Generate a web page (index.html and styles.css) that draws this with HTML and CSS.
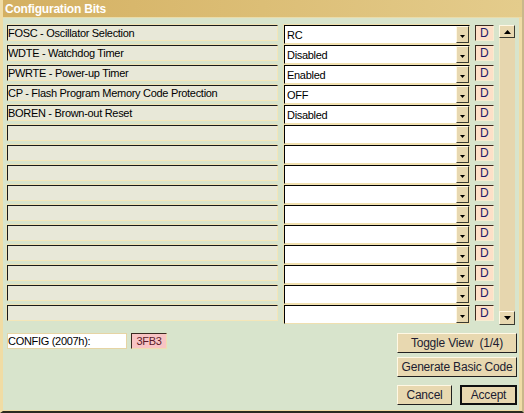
FILE: index.html
```html
<!DOCTYPE html>
<html>
<head>
<meta charset="utf-8">
<link rel="stylesheet" href="styles.css">
</head>
<body>
<div class="win">
  <div class="title">Configuration Bits</div>
  <div class="main">
    <div class="rows">
      <div class="row"><div class="lbl">FOSC - Oscillator Selection</div><div class="sel"><span class="val">RC</span><span class="dd"><svg width="5" height="3" viewBox="0 0 5 3"><path d="M0 0H5L2.5 3Z" fill="#000"/></svg></span></div><div class="d">D</div></div>
      <div class="row"><div class="lbl">WDTE - Watchdog Timer</div><div class="sel"><span class="val">Disabled</span><span class="dd"><svg width="5" height="3" viewBox="0 0 5 3"><path d="M0 0H5L2.5 3Z" fill="#000"/></svg></span></div><div class="d">D</div></div>
      <div class="row"><div class="lbl">PWRTE - Power-up Timer</div><div class="sel"><span class="val">Enabled</span><span class="dd"><svg width="5" height="3" viewBox="0 0 5 3"><path d="M0 0H5L2.5 3Z" fill="#000"/></svg></span></div><div class="d">D</div></div>
      <div class="row"><div class="lbl">CP - Flash Program Memory Code Protection</div><div class="sel"><span class="val">OFF</span><span class="dd"><svg width="5" height="3" viewBox="0 0 5 3"><path d="M0 0H5L2.5 3Z" fill="#000"/></svg></span></div><div class="d">D</div></div>
      <div class="row"><div class="lbl">BOREN - Brown-out Reset</div><div class="sel"><span class="val">Disabled</span><span class="dd"><svg width="5" height="3" viewBox="0 0 5 3"><path d="M0 0H5L2.5 3Z" fill="#000"/></svg></span></div><div class="d">D</div></div>
      <div class="row"><div class="lbl"></div><div class="sel"><span class="val"></span><span class="dd"><svg width="5" height="3" viewBox="0 0 5 3"><path d="M0 0H5L2.5 3Z" fill="#000"/></svg></span></div><div class="d">D</div></div>
      <div class="row"><div class="lbl"></div><div class="sel"><span class="val"></span><span class="dd"><svg width="5" height="3" viewBox="0 0 5 3"><path d="M0 0H5L2.5 3Z" fill="#000"/></svg></span></div><div class="d">D</div></div>
      <div class="row"><div class="lbl"></div><div class="sel"><span class="val"></span><span class="dd"><svg width="5" height="3" viewBox="0 0 5 3"><path d="M0 0H5L2.5 3Z" fill="#000"/></svg></span></div><div class="d">D</div></div>
      <div class="row"><div class="lbl"></div><div class="sel"><span class="val"></span><span class="dd"><svg width="5" height="3" viewBox="0 0 5 3"><path d="M0 0H5L2.5 3Z" fill="#000"/></svg></span></div><div class="d">D</div></div>
      <div class="row"><div class="lbl"></div><div class="sel"><span class="val"></span><span class="dd"><svg width="5" height="3" viewBox="0 0 5 3"><path d="M0 0H5L2.5 3Z" fill="#000"/></svg></span></div><div class="d">D</div></div>
      <div class="row"><div class="lbl"></div><div class="sel"><span class="val"></span><span class="dd"><svg width="5" height="3" viewBox="0 0 5 3"><path d="M0 0H5L2.5 3Z" fill="#000"/></svg></span></div><div class="d">D</div></div>
      <div class="row"><div class="lbl"></div><div class="sel"><span class="val"></span><span class="dd"><svg width="5" height="3" viewBox="0 0 5 3"><path d="M0 0H5L2.5 3Z" fill="#000"/></svg></span></div><div class="d">D</div></div>
      <div class="row"><div class="lbl"></div><div class="sel"><span class="val"></span><span class="dd"><svg width="5" height="3" viewBox="0 0 5 3"><path d="M0 0H5L2.5 3Z" fill="#000"/></svg></span></div><div class="d">D</div></div>
      <div class="row"><div class="lbl"></div><div class="sel"><span class="val"></span><span class="dd"><svg width="5" height="3" viewBox="0 0 5 3"><path d="M0 0H5L2.5 3Z" fill="#000"/></svg></span></div><div class="d">D</div></div>
      <div class="row"><div class="lbl"></div><div class="sel"><span class="val"></span><span class="dd"><svg width="5" height="3" viewBox="0 0 5 3"><path d="M0 0H5L2.5 3Z" fill="#000"/></svg></span></div><div class="d">D</div></div>
    </div>
    <div class="sb">
      <div class="sbbtn"><svg width="7" height="4" viewBox="0 0 7 4"><path d="M0 4H7L3.5 0Z" fill="#000"/></svg></div>
      <div class="track"></div>
      <div class="sbbtn down"><svg width="7" height="4" viewBox="0 0 7 4"><path d="M0 0H7L3.5 4Z" fill="#000"/></svg></div>
    </div>
  </div>
  <div class="bottom">
    <div class="cfg">
      <div class="cfgname">CONFIG (2007h):</div>
      <div class="cfgval">3FB3</div>
    </div>
    <div class="btns">
      <div class="btn">Toggle View&nbsp; (1/4)</div>
      <div class="btn">Generate Basic Code</div>
      <div class="pair">
        <div class="btn">Cancel</div>
        <div class="btn def">Accept</div>
      </div>
    </div>
  </div>
</div>
</body>
</html>
```
FILE: styles.css
```css
html, body {
  margin: 0;
  padding: 0;
  background: #d8e4cc;
}
.win {
  width: 524px;
  height: 413px;
  box-sizing: border-box;
  background: #d8e4cc;
  border-left: 3px solid #f0dca4;
  border-right: 2px solid #c9b88a;
  border-bottom: 2px solid #2b2a20;
  box-shadow: inset -3px -1px 0 #efdca6;
  font-family: "Liberation Sans", Arial, sans-serif;
  font-size: 11px;
  letter-spacing: -0.3px;
  color: #000;
  overflow: hidden;
}
.title {
  height: 17px;
  border-bottom: 1px solid #eadcaa;
  background: linear-gradient(to right, #d4b062, #dcbe76 50%, #e4cc8c);
  color: #fff;
  font-weight: bold;
  font-size: 12px;
  letter-spacing: -0.2px;
  line-height: 18px;
  padding-left: 2px;
}
.main {
  display: flex;
  gap: 5px;
  padding: 7px 0 0 4px;
}
.rows {
  display: flex;
  flex-direction: column;
}
.row {
  height: 20px;
  display: flex;
  align-items: flex-start;
}
.lbl {
  width: 271px;
  height: 16px;
  box-sizing: border-box;
  background: #e8e8d8;
  border: 1px solid;
  border-color: #1a1a1a #f4e6b8 #f4e6b8 #1a1a1a;
  box-shadow: -1px -1px 0 #f0e2b4;
  line-height: 15px;
  white-space: nowrap;
  overflow: hidden;
}
.sel {
  margin-left: 6px;
  width: 186px;
  height: 19px;
  box-sizing: border-box;
  background: #fff;
  border: 1px solid;
  border-color: #000 #f0e0b0 #f0e0b0 #000;
  box-shadow: -1px -1px 0 #f0e0b0;
  display: flex;
}
.val {
  flex: 1;
  padding-left: 2px;
  line-height: 18px;
  white-space: nowrap;
}
.dd {
  width: 13px;
  box-sizing: border-box;
  background: #e8d8b0;
  border: 1px solid;
  border-color: #fff8e4 #3a3a30 #3a3a30 #fff8e4;
  display: flex;
  align-items: center;
  justify-content: center;
  padding-top: 3px;
}
.dd svg { display: block; }
.d {
  margin-left: 5px;
  width: 19px;
  height: 16px;
  box-sizing: border-box;
  background: #fde0c8;
  border: 1px solid;
  border-color: #3a2a20 #f8ecd0 #f8ecd0 #3a2a20;
  color: #221a66;
  font-size: 12px;
  letter-spacing: 0;
  line-height: 14px;
  padding-left: 4px;
}
.sb {
  width: 16px;
  height: 300px;
  display: flex;
  flex-direction: column;
}
.sbbtn {
  height: 13px;
  box-sizing: border-box;
  background: #e8d8b0;
  border: 1px solid;
  border-color: #fff8e4 #3a3a30 #3a3a30 #fff8e4;
  display: flex;
  align-items: center;
  justify-content: center;
}
.sbbtn svg { display: block; }
.sbbtn.down { height: 14px; }
.track {
  flex: 1;
  background: #e6d6ae;
  border-left: 1px solid #f4e8c4;
}
.bottom {
  display: flex;
  justify-content: space-between;
  padding: 8px 5px 0 4px;
}
.cfg {
  display: flex;
  gap: 4px;
  align-items: flex-start;
}
.cfgname {
  width: 120px;
  height: 16px;
  box-sizing: border-box;
  background: #fff;
  border: 1px solid #e6d4a4;
  line-height: 14px;
  white-space: nowrap;
}
.cfgval {
  width: 36px;
  height: 16px;
  box-sizing: border-box;
  background: #f8c4c4;
  border: 1px solid;
  border-color: #3a2a20 #f0dcb0 #f0dcb0 #3a2a20;
  color: #5a1a2a;
  line-height: 14px;
  text-align: center;
}
.btns {
  width: 120px;
  display: flex;
  flex-direction: column;
  gap: 4px;
}
.btn {
  height: 20px;
  box-sizing: border-box;
  background: #e8d8b0;
  border: 1px solid;
  border-color: #fff8e4 #202020 #202020 #fff8e4;
  text-align: center;
  line-height: 18px;
  color: #201c30;
  font-size: 12px;
  letter-spacing: -0.2px;
  white-space: nowrap;
}
.pair {
  display: flex;
  gap: 8px;
  margin-top: 4px;
}
.pair .btn {
  flex: 1;
}
.btn.def {
  border: 2px solid #101010;
  line-height: 16px;
}
```
